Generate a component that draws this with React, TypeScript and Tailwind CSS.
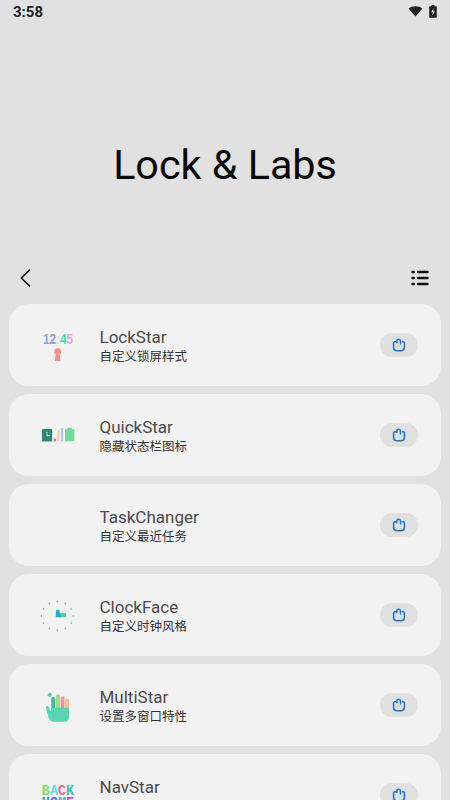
import type { ReactNode } from "react";

type PluginCardProps = {
    title: string;
    about?: string;
    icon?: ReactNode;
}

const glyphFont = "font-['Liberation_Mono',monospace] font-bold";

function LockStarIcon(){
    return(
        <svg viewBox="0 0 40 40" className="size-10">
            <text x="5" y="19.3" textLength="30" lengthAdjust="spacingAndGlyphs" fontSize="15" className="font-['Liberation_Sans',sans-serif] font-bold">
                <tspan fill="#7fa5de">1</tspan>
                <tspan fill="#8b9bdd">2</tspan>
                <tspan fill="#b8dce8">:</tspan>
                <tspan fill="#42d9ac">4</tspan>
                <tspan fill="#e5a0e5">5</tspan>
            </text>
            <path d="M19.7 23a3.6 3.6 0 0 1 2 6.6l.9 6.4h-5.8l.9-6.4a3.6 3.6 0 0 1 2-6.6z" fill="#f0918e" />
        </svg>
    )
}

function QuickStarIcon(){
    return(
        <svg viewBox="0 0 40 40" className="size-10">
            <rect x="4" y="14" width="10.2" height="12.4" rx="1" fill="#318777" />
            <path d="M9 16.7v4h3" fill="none" stroke="#b5eee0" strokeWidth="1" />
            <rect x="15.7" y="23.7" width="2.4" height="2.6" fill="#d9667c" />
            <rect x="19.3" y="15.2" width="2" height="11.1" fill="#f4c9a0" />
            <rect x="23" y="13" width="2" height="13.3" fill="#a4cdea" />
            <path d="M27 14.3h2.7v-1.6h4v1.6h2.7v12H27z" fill="#74d99c" />
        </svg>
    )
}

function ClockFaceIcon(){
    const ticks = Array.from({ length: 12 }, (_, i) => (i * Math.PI) / 6);

    return(
        <svg viewBox="0 0 40 40" className="size-10">
            {ticks.map((a, i) => (
                <circle key={i} cx={19.4 + 16 * Math.sin(a)} cy={20.9 - 14.3 * Math.cos(a)} r="0.9" fill={i === 3 ? "#8fcfb9" : "#a3a8aa"} />
            ))}
            <rect x="21" y="18" width="7" height="4.2" rx="0.6" fill="#58c9b0" />
            <path d="M18.2 15h3.4v3l1.2 1v3.3h-5v-3.8z" fill="#2ca7d3" />
        </svg>
    )
}

function MultiStarIcon(){
    return(
        <svg viewBox="0 0 40 40" className="size-10">
            <path d="M11.5 7.5l2.4 1.2-.4 2.7-2.4.5-1.9-2z" fill="#69bfb0" />
            <path d="M13.3 12.6q1.9-1.4 3.8 0V24h-3.8z" fill="#42b69a" />
            <rect x="18" y="9.6" width="3.8" height="14" rx="1" fill="#a2d982" />
            <rect x="22.6" y="11.6" width="3.8" height="12" rx="1" fill="#ed8eb0" />
            <rect x="27" y="13.7" width="4" height="10" rx="1" fill="#f3c18c" />
            <path d="M8.2 21.2c1.2-.7 2.5.1 3 1.5l1.6 3.5.5-3.5H31v9c0 3.5-2 5-5 5H16c-3.5 0-5-2.5-6-6.5C9 27 7.8 24 8.2 21.2z" fill="#5bd2b1" />
        </svg>
    )
}

function NavStarIcon(){
    return(
        <svg viewBox="0 0 40 40" className="size-10">
            <g className={glyphFont} fontSize="15">
                <text x="3.8" y="20.3" textLength="32.4" lengthAdjust="spacingAndGlyphs">
                    <tspan fill="#8ad963">B</tspan>
                    <tspan fill="#6ad8df">A</tspan>
                    <tspan fill="#e66b91">C</tspan>
                    <tspan fill="#42bfae">K</tspan>
                </text>
                <text x="3.8" y="32" textLength="32.4" lengthAdjust="spacingAndGlyphs">
                    <tspan fill="#398bd0">H</tspan>
                    <tspan fill="#5f70df">O</tspan>
                    <tspan fill="#42bfae">M</tspan>
                    <tspan fill="#c947d8">E</tspan>
                </text>
            </g>
        </svg>
    )
}

function PluginCard({title, about, icon}:PluginCardProps){
    return(
        <div className="flex h-[82px] w-full shrink-0 items-center rounded-[20px] bg-[#f2f2f2] pr-[23px] pl-[29px]">
            <div className="size-10 shrink-0">{icon}</div>
            <div className="flex grow flex-col pt-[3px] pl-[21.5px]">
                <h2 className="text-[17px] leading-5 text-[#4a4a4a]">{title}</h2>
                <p className="min-h-[19px] text-[12.5px] leading-[19px] text-[#333]">{about}</p>
            </div>
            <button className="flex h-6 w-[38px] items-center justify-center rounded-full bg-[#e0e0e0]">
                <svg viewBox="0 0 14 14" className="size-3.5" fill="none" stroke="#2372c4" strokeWidth="1.5" strokeLinecap="round">
                    <path d="M4.7 3.8H2.9c-.8 0-1.3.5-1.3 1.3v4.5c0 2 1.1 3.1 3.1 3.1h4.6c2 0 3.1-1.1 3.1-3.1V5.1c0-.8-.5-1.3-1.3-1.3h-.6" />
                    <path d="M4.7 4.800V3.200a1.900 1.900 0 0 1 3.800 0v2.800" />
                </svg>
            </button>
        </div>
    )
}

const plugins: PluginCardProps[] = [
    { title: "LockStar", about: "自定义锁屏样式", icon: <LockStarIcon /> },
    { title: "QuickStar", about: "隐藏状态栏图标", icon: <QuickStarIcon /> },
    { title: "TaskChanger", about: "自定义最近任务" },
    { title: "ClockFace", about: "自定义时钟风格", icon: <ClockFaceIcon /> },
    { title: "MultiStar", about: "设置多窗口特性", icon: <MultiStarIcon /> },
    { title: "NavStar", icon: <NavStarIcon /> },
];

export default function App(){
    return(
        <div className="flex h-[800px] w-[450px] flex-col overflow-hidden bg-[#e1e1e1] font-[Roboto,'Noto_Sans_CJK_SC',sans-serif]">
            <div className="flex h-6 shrink-0 items-center justify-between px-[13px]">
                <span className="text-[15px] font-bold text-[#222]">3:58</span>
                <div className="flex items-center gap-1.5 pb-0.5">
                    <svg viewBox="0 0 16 12" className="h-3 w-[15px]" fill="#222">
                        <path d="M.6 3.2C5 0 11 0 15.4 3.2L8 11.8z" />
                    </svg>
                    <svg viewBox="0 0 8 13" className="h-[13px] w-2">
                        <path d="M2.5 0h3v1.2H7q.8 0 .8.8v10q0 .8-.8.8H1q-.8 0-.8-.8V2q0-.8.8-.8h1.5z" fill="#222" />
                        <path d="M4.500 3.500L2.200 7.300h1.400v3L5.900 6.500H4.500z" fill="#e1e1e1" />
                    </svg>
                </div>
            </div>
            <div className="flex h-[228px] shrink-0 items-center justify-center pt-14">
                <h1 className="text-[41.3px] leading-none whitespace-nowrap text-[#080808]">Lock &amp; Labs</h1>
            </div>
            <div className="flex h-[52px] shrink-0 items-center justify-between pr-[21px] pl-5">
                <svg viewBox="0 0 11 18" className="h-[18px] w-[11px]" fill="none" stroke="#111" strokeWidth="1.7" strokeLinecap="round" strokeLinejoin="round">
                    <path d="M9.5 1L1.3 9l8.200 8" />
                </svg>
                <svg viewBox="0 0 18 16" className="h-4 w-[18px]" stroke="#111" strokeWidth="2.4" strokeLinecap="round">
                    <path d="M1.5 2h1.200M7 2h9.500M1.500 8h1.200M7 8h9.500M1.500 14h1.200M7 14h9.500" />
                </svg>
            </div>
            <div className="flex flex-col gap-2 px-[9px]">
                {plugins.map((plugin) => (
                    <PluginCard key={plugin.title} {...plugin} />
                ))}
            </div>
        </div>
    )
}
